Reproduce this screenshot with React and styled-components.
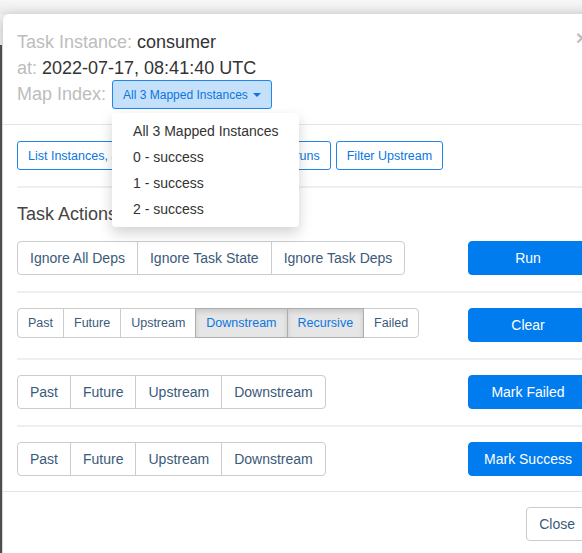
import React from "react";
import styled, { createGlobalStyle, css } from "styled-components";

const GlobalStyle = createGlobalStyle`
  html, body {
    margin: 0;
    padding: 0;
    overflow: hidden;
    height: 100%;
  }
  body {
    font-family: "Liberation Sans", Arial, Helvetica, sans-serif;
    font-size: 14px;
    color: #333;
    background:
      linear-gradient(90deg, #555 2px, transparent 2px) 0 45px / 100% 100% no-repeat,
      linear-gradient(180deg, #f7f7f7 0, #e9e9e9 14px, #f4f4f4 14px);
  }
  * {
    box-sizing: border-box;
  }
`;

const Modal = styled.div`
  margin: 14px 0 0 3px;
  width: 600px;
  background: #fff;
  border-radius: 6px 6px 0 0;
  box-shadow: 0 3px 12px rgba(0, 0, 0, 0.25);
`;

const Header = styled.div`
  padding: 15px 15px 15px 14px;
  border-bottom: 1px solid #e5e5e5;
  font-size: 18px;
`;

const CloseX = styled.button`
  float: right;
  margin-top: -2px;
  padding: 0;
  border: 0;
  background: transparent;
  font-family: "Liberation Sans", Arial, sans-serif;
  font-size: 21px;
  font-weight: bold;
  line-height: 1;
  color: #000;
  opacity: 0.25;
  cursor: pointer;
`;

const InfoLine = styled.div`
  display: flex;
  align-items: center;
  height: ${(p) => (p.$tall ? "29px" : "26px")};
  margin-top: ${(p) => (p.$tall ? "-1px" : "0")};
  white-space: nowrap;
`;

const Label = styled.span`
  color: #bdbdbd;
  margin-right: 5px;
`;

const Value = styled.span`
  color: #333;
`;

const DropWrap = styled.div`
  position: relative;
  margin-left: 1px;
`;

const MapButton = styled.button`
  display: flex;
  align-items: center;
  height: 29px;
  padding: 0 10px;
  font-family: "Liberation Sans", Arial, sans-serif;
  font-size: 12px;
  color: #0b76e0;
  background: #c5e0fa;
  border: 1px solid #1f86ea;
  border-radius: 3px;
  cursor: pointer;
`;

const Caret = styled.span`
  display: inline-block;
  margin-left: 5px;
  margin-top: 1px;
  border-top: 4px solid #0b76e0;
  border-left: 4px solid transparent;
  border-right: 4px solid transparent;
`;

const Menu = styled.ul`
  position: absolute;
  top: calc(100% + 4px);
  left: 0;
  z-index: 10;
  margin: 0;
  padding: 5px 0;
  list-style: none;
  min-width: 187px;
  background: #fff;
  border-radius: 4px;
  box-shadow: 0 6px 14px rgba(0, 0, 0, 0.18);
`;

const MenuItem = styled.li`
  padding: 3px 20px 3px 21px;
  line-height: 20px;
  font-size: 14px;
  color: #333;
  white-space: nowrap;
`;

const Body = styled.div`
  padding: 15px 15px 15px 14px;
`;

const LinkRow = styled.div`
  display: flex;
  gap: 5px;
  padding-top: 1px;
`;

const OutlineButton = styled.button`
  height: 29px;
  padding: 0 10px;
  font-family: "Liberation Sans", Arial, sans-serif;
  font-size: 12.5px;
  color: #0b76e0;
  background: #fff;
  border: 1px solid #1f86ea;
  border-radius: 3px;
  white-space: nowrap;
`;

const Divider = styled.div`
  border-top: 2px solid #efefef;
  margin: 16px 0 15px;
`;

const Heading = styled.h4`
  margin: 0 0 16px;
  font-size: 18px;
  font-weight: normal;
  line-height: 22px;
  color: #444;
`;

const ActionRow = styled.div`
  display: flex;
  justify-content: space-between;
  align-items: flex-start;
  height: 34px;
`;

const Group = styled.div`
  display: flex;
`;

const GroupButton = styled.button`
  font-family: "Liberation Sans", Arial, sans-serif;
  white-space: nowrap;
  background: #fff;
  color: #3a5a7a;
  border: 1px solid #ccc;
  margin-left: -1px;
  ${(p) =>
    p.$small
      ? css`
          height: 30px;
          padding: 0 10px;
          font-size: 12.5px;
        `
      : css`
          height: 34px;
          padding: 0 12px;
          font-size: 14px;
        `}
  &:first-child {
    margin-left: 0;
    border-radius: 4px 0 0 4px;
  }
  &:last-child {
    border-radius: 0 4px 4px 0;
  }
  ${(p) =>
    p.$active &&
    css`
      background: #e6e6e6;
      border-color: #adadad;
      color: #0b76e0;
      box-shadow: inset 0 3px 5px rgba(0, 0, 0, 0.125);
      position: relative;
    `}
`;

const PrimaryButton = styled.button`
  width: 120px;
  height: 34px;
  padding: 0 12px;
  font-family: "Liberation Sans", Arial, sans-serif;
  font-size: 14px;
  color: #fff;
  background: #017cee;
  border: 1px solid #017cee;
  border-radius: 4px;
  white-space: nowrap;
`;

const Footer = styled.div`
  display: flex;
  justify-content: flex-end;
  padding: 15px 15px;
  border-top: 1px solid #e5e5e5;
`;

const DefaultButton = styled.button`
  height: 34px;
  padding: 0 12px;
  font-family: "Liberation Sans", Arial, sans-serif;
  font-size: 14px;
  color: #3a5a7a;
  background: #fff;
  border: 1px solid #ccc;
  border-radius: 4px;
`;

const mapOptions = ["All 3 Mapped Instances", "0 - success", "1 - success", "2 - success"];

const actions = [
  {
    label: "Run",
    small: false,
    options: [
      { name: "Ignore All Deps" },
      { name: "Ignore Task State" },
      { name: "Ignore Task Deps" },
    ],
  },
  {
    label: "Clear",
    small: true,
    options: [
      { name: "Past" },
      { name: "Future" },
      { name: "Upstream" },
      { name: "Downstream", active: true },
      { name: "Recursive", active: true },
      { name: "Failed" },
    ],
  },
  {
    label: "Mark Failed",
    small: false,
    options: [{ name: "Past" }, { name: "Future" }, { name: "Upstream" }, { name: "Downstream" }],
  },
  {
    label: "Mark Success",
    small: false,
    options: [{ name: "Past" }, { name: "Future" }, { name: "Upstream" }, { name: "Downstream" }],
  },
];

function ActionLine({ action }) {
  return (
    <ActionRow>
      <Group>
        {action.options.map((opt) => (
          <GroupButton key={opt.name} $small={action.small} $active={opt.active}>
            {opt.name}
          </GroupButton>
        ))}
      </Group>
      <PrimaryButton>{action.label}</PrimaryButton>
    </ActionRow>
  );
}

export default function App() {
  return (
    <>
      <GlobalStyle />
      <Modal>
        <Header>
          <CloseX aria-label="Close">×</CloseX>
          <InfoLine>
            <Label>Task Instance:</Label>
            <Value>consumer</Value>
          </InfoLine>
          <InfoLine>
            <Label>at:</Label>
            <Value>2022-07-17, 08:41:40 UTC</Value>
          </InfoLine>
          <InfoLine $tall>
            <Label>Map Index:</Label>
            <DropWrap>
              <MapButton>
                All 3 Mapped Instances
                <Caret />
              </MapButton>
              <Menu>
                {mapOptions.map((o) => (
                  <MenuItem key={o}>{o}</MenuItem>
                ))}
              </Menu>
            </DropWrap>
          </InfoLine>
        </Header>
        <Body>
          <LinkRow>
            <OutlineButton>List Instances, all runs</OutlineButton>
            <OutlineButton>Linked Instances, all runs</OutlineButton>
            <OutlineButton>Filter Upstream</OutlineButton>
          </LinkRow>
          <Divider />
          <Heading>Task Actions</Heading>
          {actions.map((a, i) => (
            <React.Fragment key={a.label}>
              {i > 0 && <Divider />}
              <ActionLine action={a} />
            </React.Fragment>
          ))}
        </Body>
        <Footer>
          <DefaultButton>Close</DefaultButton>
        </Footer>
      </Modal>
    </>
  );
}
